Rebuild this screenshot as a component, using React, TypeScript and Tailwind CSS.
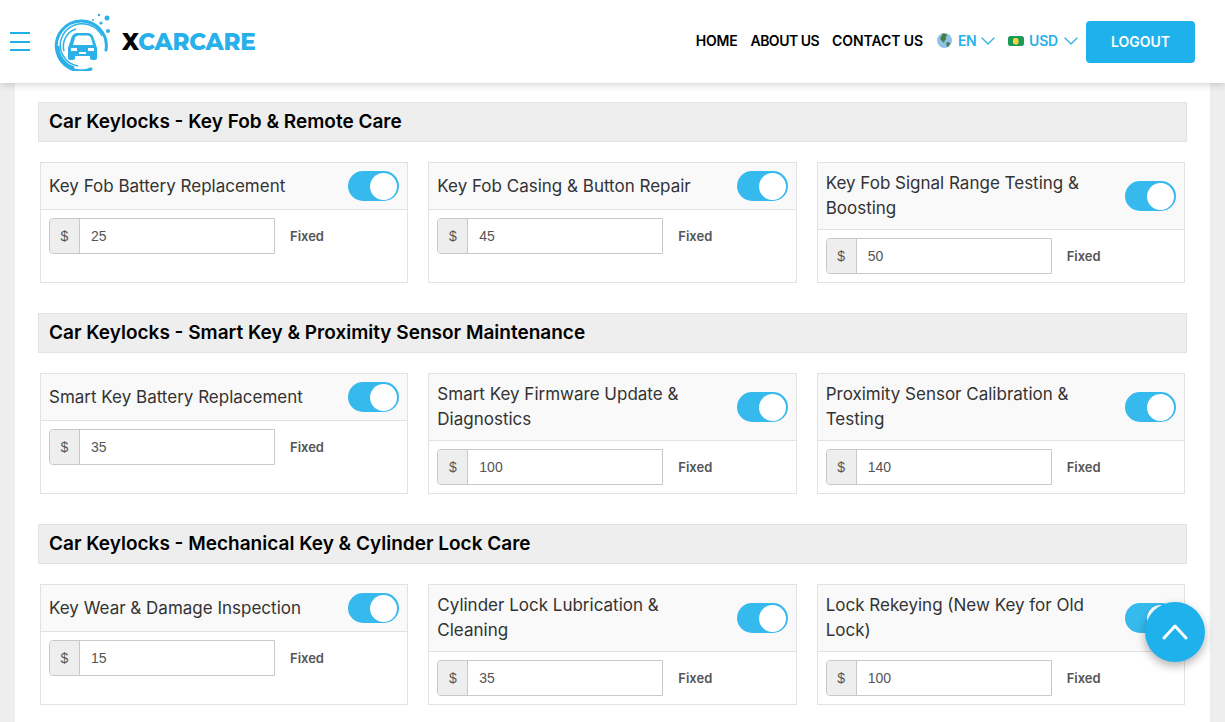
import { ChevronDown } from 'lucide-react';

type Service = { name: string; price: string };
type Section = { title: string; services: Service[] };

const sections: Section[] = [
  {
    title: 'Car Keylocks - Key Fob & Remote Care',
    services: [
      { name: 'Key Fob Battery Replacement', price: '25' },
      { name: 'Key Fob Casing & Button Repair', price: '45' },
      { name: 'Key Fob Signal Range Testing & Boosting', price: '50' },
    ],
  },
  {
    title: 'Car Keylocks - Smart Key & Proximity Sensor Maintenance',
    services: [
      { name: 'Smart Key Battery Replacement', price: '35' },
      { name: 'Smart Key Firmware Update & Diagnostics', price: '100' },
      { name: 'Proximity Sensor Calibration & Testing', price: '140' },
    ],
  },
  {
    title: 'Car Keylocks - Mechanical Key & Cylinder Lock Care',
    services: [
      { name: 'Key Wear & Damage Inspection', price: '15' },
      { name: 'Cylinder Lock Lubrication & Cleaning', price: '35' },
      { name: 'Lock Rekeying (New Key for Old Lock)', price: '100' },
    ],
  },
];

function LogoMark() {
  return (
    <svg width="58" height="58" viewBox="0 0 58 58" fill="none" className="shrink-0">
      {/* swirl around the car */}
      <path d="M52 37A25 25 0 1 0 37 56" stroke="#2cb0e8" strokeWidth="3" strokeLinecap="round" />
      <path d="M4 33A23 23 0 0 0 20 55" stroke="#2cb0e8" strokeWidth="3" />
      <path d="M48 23A22 22 0 0 0 8 24" stroke="#2cb0e8" strokeWidth="1.5" />
      <path d="M8 24A21 21 0 0 0 24 53" stroke="#2cb0e8" strokeWidth="1.5" />
      <path d="M10 38A18 18 0 0 1 22 16" stroke="#2cb0e8" strokeWidth="1.5" />
      {/* car */}
      <path
        d="M14 35L17 26C18 22 20 20 24 20H34C37 20 39 22 40 26L43 35V45C43 46 42 47 41 47H38C37 47 36 46 36 45V43H21V45C21 46 20 47 19 47H16C15 47 14 46 14 45Z"
        fill="#2cb0e8"
      />
      <path d="M19 32L21 25C21.5 23.5 23 22.5 25 22.5H33C35 22.5 36.5 23.5 37 25L39 32Z" fill="#fff" />
      <path d="M17 35H23V38H17ZM34 35H40V38H34ZM25 39H32V41H25Z" fill="#fff" />
      {/* droplets */}
      <circle cx="45" cy="2" r="1.2" fill="#2cb0e8" />
      <circle cx="53" cy="5" r="2.5" fill="#2cb0e8" />
      <circle cx="39" cy="7" r="1" fill="#2cb0e8" />
      <circle cx="47" cy="10" r="1.6" fill="#2cb0e8" />
      <circle cx="54" cy="18" r="2" fill="#2cb0e8" />
    </svg>
  );
}

function Globe() {
  return (
    <svg width="15" height="15" viewBox="0 0 16 16" className="shrink-0">
      <circle cx="8" cy="8" r="8" fill="#8fc4e8" />
      <path d="M6 0.5C8 0.5 10 1 11 2.5L9 4.5L10 6L8 8.5L7.5 11L6 9L4 7.5L3.5 5L5 3Z" fill="#4b7d45" />
      <path d="M10 10L13 9.5L14 11.5L11.5 15L10 13.5Z" fill="#4b7d45" />
    </svg>
  );
}

function Money() {
  return (
    <svg width="16" height="10" viewBox="0 0 16 10" className="shrink-0">
      <rect width="16" height="10" rx="2.5" fill="#1d9a57" />
      <rect x="5" y="2" width="5.5" height="6.5" rx="2" fill="#f4d34a" />
    </svg>
  );
}

function ServiceCard({ name, price }: Service) {
  return (
    <div className="border border-[#e2e2e2] bg-white flex flex-col h-[121px]">
      <div className="flex items-center gap-2 bg-[#f9f9f9] border-b border-[#e2e2e2] px-2 py-2">
        <p className="flex-1 text-[17px] leading-[25px] text-[#333]">{name}</p>
        <div className="w-[51px] h-[30px] rounded-full bg-[#36b9ed] flex items-center justify-end pr-[2px] shrink-0">
          <span className="w-[27px] h-[27px] rounded-full bg-white" />
        </div>
      </div>
      <div className="flex items-center pl-2 pt-2">
        <div className="flex w-[226px] h-[36px] border border-[#c8c8c8] rounded-l-[4px] font-['Liberation_Sans',sans-serif] text-[14px] text-[#555]">
          <span className="w-[30px] bg-[#eeeeee] border-r border-[#c8c8c8] rounded-l-[4px] flex items-center justify-center">$</span>
          <span className="flex-1 bg-white pl-[11px] flex items-center">{price}</span>
        </div>
        <span className="ml-[15px] mt-[1px] text-[13px] font-semibold text-[#555]">Fixed</span>
      </div>
    </div>
  );
}

export default function App() {
  return (
    <div className="relative h-[722px] overflow-hidden bg-[#eeeeee] font-['Inter',sans-serif]">
      <header className="relative z-10 h-[83px] bg-white shadow-[0_1px_8px_rgba(0,0,0,0.2)] flex items-center pl-[10px] pr-[30px]">
        <div className="flex flex-col gap-[6.5px] w-5 mr-[24px]">
          <span className="h-[2px] bg-[#1fb1ec]" />
          <span className="h-[2px] bg-[#1fb1ec]" />
          <span className="h-[2px] bg-[#1fb1ec]" />
        </div>
        <LogoMark />
        <span className="ml-[10px] mt-[2px] font-['Montserrat','Inter',sans-serif] text-[23px] font-extrabold tracking-[-0.2px]">
          <span className="text-black">X</span>
          <span className="text-[#27b0ea]">CARCARE</span>
        </span>
        <nav className="ml-auto flex items-center text-[14px] font-semibold text-black -mt-[2px]">
          <a className="mr-[13px] tracking-[-0.2px]">HOME</a>
          <a className="mr-[13px] tracking-[-0.5px]">ABOUT US</a>
          <a className="mr-[14px] tracking-[-0.1px]">CONTACT US</a>
          <span className="flex items-center gap-[6px] text-[#27b0ea] mr-[8px]">
            <Globe />
            <span className="tracking-[-0.5px]">EN</span>
            <ChevronDown className="w-6 h-6 -ml-[6px]" strokeWidth={1.25} />
          </span>
          <span className="flex items-center gap-[5px] text-[#27b0ea]">
            <Money />
            <span className="tracking-[-0.2px]">USD</span>
            <ChevronDown className="w-6 h-6 -ml-[4px]" strokeWidth={1.25} />
          </span>
        </nav>
        <button className="ml-[3px] w-[109px] h-[42px] rounded-[4px] bg-[#1fb1ec] text-white text-[14px] font-semibold">
          LOGOUT
        </button>
      </header>

      <main className="mx-[15px] w-[1195px] h-[639px] bg-white px-[23px] pt-[19px] flex flex-col gap-[30px]">
        {sections.map((section) => (
          <section key={section.title}>
            <h2 className="h-[40px] flex items-center bg-[#eeeeee] border border-[#e2e2e2] px-[10px] text-[19px] font-semibold text-black">
              {section.title}
            </h2>
            <div className="grid grid-cols-3 gap-x-5 px-[2px] mt-[20px]">
              {section.services.map((service) => (
                <ServiceCard key={service.name} {...service} />
              ))}
            </div>
          </section>
        ))}
      </main>

      <button className="absolute left-[1145px] top-[602px] z-20 w-[60px] h-[60px] rounded-full bg-[#1fb1ec] shadow-[0_4px_10px_rgba(0,0,0,0.3)] flex items-center justify-center">
        <svg width="26" height="16" viewBox="0 0 26 16" fill="none" stroke="#fff" strokeWidth="3" strokeLinecap="round" strokeLinejoin="round">
          <path d="M2 14L13 2L24 14" />
        </svg>
      </button>
    </div>
  );
}
